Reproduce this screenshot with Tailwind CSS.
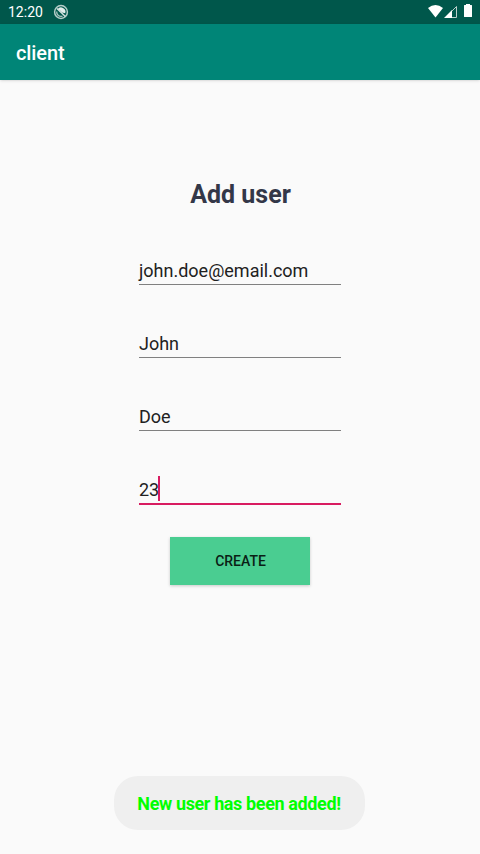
<!DOCTYPE html>
<html lang="en"><head><meta charset="utf-8"><title>client</title><script src="https://cdn.jsdelivr.net/npm/@tailwindcss/browser@4"></script></head>
<body class="w-[480px] h-[854px] overflow-hidden bg-[#fafafa] font-['Roboto',sans-serif] flex flex-col">
<header class="flex h-6 shrink-0 items-center justify-between bg-[#00574b] pl-2 pr-2 text-white">
<div class="flex items-center gap-2.5"><span class="text-[14px] leading-6">12:20</span>
<svg class="size-4" viewBox="0 0 16 16" fill="none"><circle cx="8" cy="8" r="6.4" stroke="#b5cdc9" stroke-width="1.5"/><path d="M4.500 5.500A4.300 4.300 0 0 1 12.200 9.200L9 8.500 7 6.500z" fill="#e4eeec"/><path d="M3.700 7.500a4.300 4.300 0 0 0 5.800 4.600" stroke="#a9c5c0" stroke-width="1.300"/><path d="M4 4.500l8.300 8" stroke="#d3e2df" stroke-width="1.500"/></svg></div>
<svg class="h-6 w-[46px]" viewBox="0 0 46 24" fill="#fff"><path d="M2 8Q9.500 2.200 17 8L9.500 17.500z"/><path d="M30.500 6.500v11h-11z" fill="none" stroke="#b9ceca"/><path d="M26 10v8h-8z"/><path d="M38 5.500q0-.5.500-.5H40V4h4v1h1.500q.5 0 .5.500v11q0 .5-.5.500h-7q-.5 0-.5-.5z"/></svg></header>
<div class="flex h-14 shrink-0 items-center bg-[#008577] px-4 pt-0.5 shadow"><h1 class="text-[20px] font-medium tracking-[-0.1px] text-white">client</h1></div>
<main class="flex flex-1 flex-col items-center">
<h2 class="mt-[99px] pl-px text-[25px] font-bold leading-8 text-[#333748]">Add user</h2>
<form class="mt-[41px] flex w-[202px] flex-col text-[18px] text-[#212121]">
<div class="h-[33px] border-b border-[#808080] leading-[38px]">john.doe@email.com</div>
<div class="mt-10 h-[33px] border-b border-[#808080] leading-[38px]">John</div>
<div class="mt-10 h-[33px] border-b border-[#808080] leading-[38px]">Doe</div>
<div class="mt-10 flex h-[34px] border-b-2 border-[#d81b60] leading-[38px]">23<span class="-ml-px mt-[5px] h-[25px] w-0.5 bg-[#d81b60]"></span></div>
</form>
<button type="button" class="mt-8 h-12 w-[140px] bg-[#4acd91] pl-px text-[14px] font-medium text-[#0a1e15] shadow-[0_1px_3px_#0003]">CREATE</button>
<div class="mt-auto mr-0.5 mb-6 flex h-[54px] w-[251px] items-center justify-center rounded-[24px] bg-[#efefef] text-[18px] font-bold tracking-[-0.38px] text-[#0f0]">New user has been added!</div>
</main></body></html>
